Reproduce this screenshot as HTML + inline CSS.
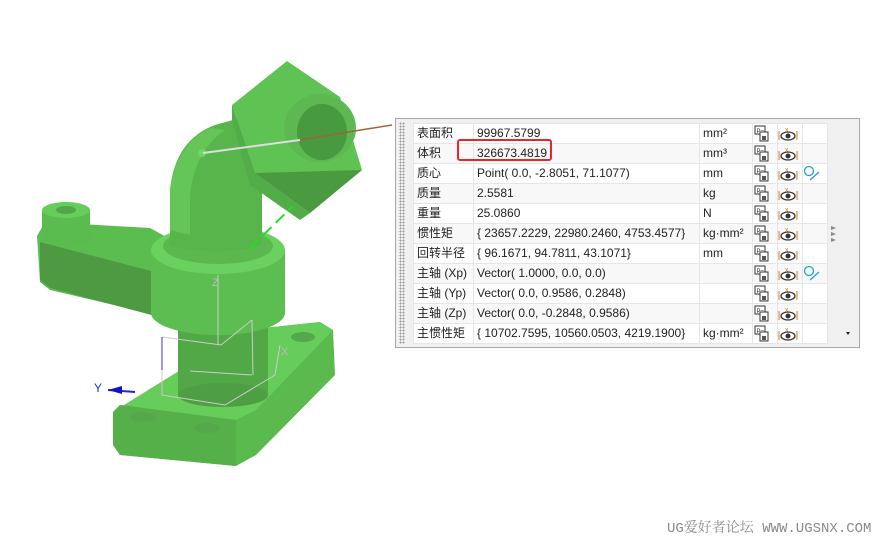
<!DOCTYPE html>
<html><head><meta charset="utf-8"><style>
body{margin:0;width:879px;height:540px;background:#fff;position:relative;overflow:hidden;font-family:"Liberation Sans","Noto Sans CJK SC",sans-serif;}
#panel{position:absolute;left:395px;top:118px;width:465px;height:230px;border:1px solid #a8a8a8;background:#f0f0f0;box-sizing:border-box;}
#grip{position:absolute;left:3px;top:3px;width:6px;height:222px;background-image:radial-gradient(#999 0.8px,transparent 1px);background-size:3px 3px;}
table{position:absolute;left:17px;top:4px;border-collapse:collapse;background:#fff;font-size:12px;color:#222;}
td{height:19px;border:1px solid #e6e6e6;padding:0 3px;white-space:nowrap;line-height:19px;}
tr:nth-child(even) td{background:#f8f8f8}
td.ic{width:18px;padding:0 3px;}
#hl{position:absolute;left:457px;top:139px;width:95px;height:22px;border:2.5px solid #e8262b;border-radius:3px;box-sizing:border-box;}
.wm{position:absolute;left:667px;top:517px;font-family:"Liberation Mono","Noto Serif CJK SC",monospace;font-size:14px;color:#8a8a8a;letter-spacing:0px}
</style></head><body>
<svg width="879" height="540" style="position:absolute;left:0;top:0">
<polygon points="113,412 245,330 320,322 333,330 335,375 256,455 236,466 120,455 113,445" fill="#5aba4e"/>
<polygon points="113,412 245,330 320,322 333,330 256,410 236,420 120,405" fill="#66cc5a"/>
<polygon points="113,412 120,405 236,420 236,466 120,455 113,445" fill="#56b04a"/>
<ellipse cx="143" cy="417" rx="13" ry="5" fill="#55a849"/>
<ellipse cx="207" cy="428" rx="13" ry="5" fill="#55a849"/>
<ellipse cx="303" cy="337" rx="12" ry="5" fill="#55a849"/>
<rect x="178" y="320" width="90" height="75" fill="#52a846"/>
<ellipse cx="223" cy="395" rx="45" ry="12" fill="#4e9f43"/>
<polygon points="37,236 45,222 150,228 190,250 178,320 50,290 40,282" fill="#5bbd50"/>
<polygon points="40,242 178,278 178,322 50,288 40,280" fill="#4e9a43"/>
<rect x="42" y="210" width="48" height="28" fill="#5abb4f"/>
<ellipse cx="66" cy="238" rx="24" ry="8" fill="#5abb4f"/>
<ellipse cx="66" cy="210" rx="24" ry="8" fill="#66cc5a"/>
<ellipse cx="66" cy="210" rx="10" ry="4" fill="#52a846"/>
<rect x="151" y="250" width="134" height="63" fill="#5cbe50"/>
<ellipse cx="218" cy="313" rx="67" ry="22" fill="#5cbe50"/>
<ellipse cx="218" cy="250" rx="67" ry="24" fill="#6bd15e"/>
<ellipse cx="218" cy="246" rx="55" ry="18" fill="#5ab84e"/>
<path d="M170,245 L170,190 Q175,140 215,125 L240,118 L262,178 Q262,200 262,215 L262,245 Q218,258 170,245Z" fill="#58b54c"/>
<path d="M170,230 L170,190 Q176,145 210,128 L225,130 Q195,150 190,195 L190,235Z" fill="#63c657"/>
<circle cx="202" cy="153" r="4" fill="#6fd563"/>
<polygon points="232,105 287,61 340,97 362,170 310,213 255,173" fill="#5fc354"/>
<polygon points="255,173 362,170 310,213" fill="#4a9a3f"/>
<polygon points="232,105 255,173 310,213 300,220 250,185 232,120" fill="#52ac47"/>
<ellipse cx="320" cy="128" rx="36" ry="34" fill="#5db852"/>
<ellipse cx="322" cy="132" rx="25" ry="28" fill="#479a3d"/>
<line x1="203" y1="153" x2="300" y2="140" stroke="#ddd" stroke-width="2"/>
<path d="M300,140 Q360,130 392,125" stroke="#a0643a" stroke-width="1.5" fill="none"/>
<line x1="250" y1="248" x2="293" y2="206" stroke="#22dd22" stroke-width="2" stroke-dasharray="12,6"/>
<g stroke="#ccc" stroke-width="1" fill="none">
<line x1="218" y1="345" x2="218" y2="275"/>
<polyline points="162,337 221,345 252,320"/>
<polyline points="162,337 162,395 225,405 275,375 280,345"/>
<line x1="190" y1="371" x2="252" y2="375"/>
<line x1="252" y1="320" x2="253" y2="375"/>
</g>
<line x1="162" y1="337" x2="162" y2="370" stroke="#3333dd"/>
<line x1="108" y1="390" x2="135" y2="392" stroke="#2222dd" stroke-width="2"/>
<polygon points="108,390 122,386 122,394" fill="#1111cc"/>
<text x="94" y="392" font-size="12" fill="#2233dd" font-family="Liberation Sans">Y</text>
<text x="212" y="286" font-size="11" fill="#bbb" font-family="Liberation Sans">Z</text>
<text x="281" y="355" font-size="11" fill="#bbb" font-family="Liberation Sans">X</text>
</svg>
<div id="panel"><div id="grip"></div>
<table>
<tr><td style="width:53px">表面积</td><td style="width:219px">99967.5799</td><td style="width:46px">mm²</td><td class="ic"></td><td class="ic"></td><td class="ic"></td></tr>
<tr><td>体积</td><td>326673.4819</td><td>mm³</td><td class="ic"></td><td class="ic"></td><td class="ic"></td></tr>
<tr><td>质心</td><td>Point( 0.0, -2.8051, 71.1077)</td><td>mm</td><td class="ic"></td><td class="ic"></td><td class="ic"></td></tr>
<tr><td>质量</td><td>2.5581</td><td>kg</td><td class="ic"></td><td class="ic"></td><td class="ic"></td></tr>
<tr><td>重量</td><td>25.0860</td><td>N</td><td class="ic"></td><td class="ic"></td><td class="ic"></td></tr>
<tr><td>惯性矩</td><td>{ 23657.2229, 22980.2460, 4753.4577}</td><td>kg·mm²</td><td class="ic"></td><td class="ic"></td><td class="ic"></td></tr>
<tr><td>回转半径</td><td>{ 96.1671, 94.7811, 43.1071}</td><td>mm</td><td class="ic"></td><td class="ic"></td><td class="ic"></td></tr>
<tr><td>主轴 (Xp)</td><td>Vector( 1.0000, 0.0, 0.0)</td><td></td><td class="ic"></td><td class="ic"></td><td class="ic"></td></tr>
<tr><td>主轴 (Yp)</td><td>Vector( 0.0, 0.9586, 0.2848)</td><td></td><td class="ic"></td><td class="ic"></td><td class="ic"></td></tr>
<tr><td>主轴 (Zp)</td><td>Vector( 0.0, -0.2848, 0.9586)</td><td></td><td class="ic"></td><td class="ic"></td><td class="ic"></td></tr>
<tr><td>主惯性矩</td><td>{ 10702.7595, 10560.0503, 4219.1900}</td><td>kg·mm²</td><td class="ic"></td><td class="ic"></td><td class="ic"></td></tr>
</table>
</div>
<svg width="879" height="540" style="position:absolute;left:0;top:0;pointer-events:none">
<defs>
<g id="ic1"><rect x="0" y="0" width="10" height="8" fill="#fff" stroke="#333"/><text x="1.5" y="7" font-size="6" font-family="Liberation Sans" fill="#333">P=</text><rect x="5" y="6" width="8" height="9" fill="#fff" stroke="#333"/><rect x="7" y="10" width="4" height="4" fill="#555"/></g>
<g id="ic2"><line x1="0" y1="5" x2="0" y2="14" stroke="#e87a1e"/><line x1="18" y1="5" x2="18" y2="14" stroke="#e87a1e"/><text x="6" y="6" font-size="7" fill="#e87a1e" font-family="Liberation Sans">x</text><ellipse cx="9" cy="10" rx="7" ry="4" fill="#fff" stroke="#333" stroke-width="1.3"/><circle cx="9" cy="10" r="2.5" fill="#333"/></g>
<g id="ic3"><circle cx="5" cy="5" r="4.5" fill="none" stroke="#1fa3d8" stroke-width="1.3"/><line x1="6" y1="14" x2="15" y2="6" stroke="#1fa3d8" stroke-width="1.3"/></g>
</defs>
<g>
<use href="#ic1" x="755" y="126"/><use href="#ic2" x="779" y="126"/>
<use href="#ic1" x="755" y="146"/><use href="#ic2" x="779" y="146"/>
<use href="#ic1" x="755" y="166"/><use href="#ic2" x="779" y="166"/><use href="#ic3" x="804" y="166"/>
<use href="#ic1" x="755" y="186"/><use href="#ic2" x="779" y="186"/>
<use href="#ic1" x="755" y="206"/><use href="#ic2" x="779" y="206"/>
<use href="#ic1" x="755" y="226"/><use href="#ic2" x="779" y="226"/>
<use href="#ic1" x="755" y="246"/><use href="#ic2" x="779" y="246"/>
<use href="#ic1" x="755" y="266"/><use href="#ic2" x="779" y="266"/><use href="#ic3" x="804" y="266"/>
<use href="#ic1" x="755" y="286"/><use href="#ic2" x="779" y="286"/>
<use href="#ic1" x="755" y="306"/><use href="#ic2" x="779" y="306"/>
<use href="#ic1" x="755" y="326"/><use href="#ic2" x="779" y="326"/>
</g>
<polygon points="831,226 836,228 831,230" fill="#888"/>
<polygon points="831,232 836,234 831,236" fill="#888"/>
<polygon points="831,238 836,240 831,242" fill="#888"/>
<polygon points="846,332 850,332 848,335" fill="#222"/>
</svg>
<div id="hl"></div>
<div class="wm">UG爱好者论坛 WWW.UGSNX.COM</div>
</body></html>
